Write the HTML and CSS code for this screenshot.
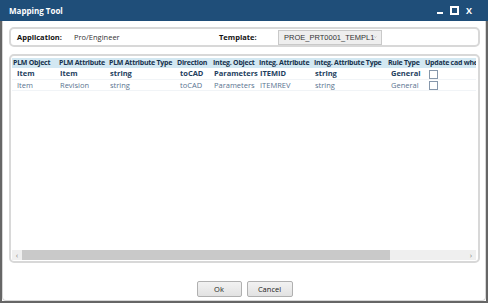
FILE: index.html
```html
<!DOCTYPE html>
<html lang="en">
  <head>
    <meta charset="UTF-8" />
    <title>Mapping Tool</title>
    <link rel="stylesheet" href="styles.css">
  </head>
  <body>
    <div class="window">
      <div class="titlebar">
        <span class="title">Mapping Tool</span>
        <div class="controls">
          <span class="ctl min"></span>
          <span class="ctl max"></span>
          <span class="ctl close">X</span>
        </div>
      </div>
      <div class="content">
        <div class="group top">
          <span class="label app-label">Application:</span>
          <span class="value">Pro/Engineer</span>
          <span class="label tpl-label">Template:</span>
          <div class="combo">
            <span>PROE_PRT0001_TEMPL1</span>
            <svg class="chev" width="6" height="4" viewBox="0 0 6 4"><path d="M1 1 L3 3 L5 1" fill="none" stroke="#777" stroke-width="0.9"/></svg>
          </div>
        </div>
        <div class="group grid">
          <div class="table-wrap">
            <table class="map">
              <colgroup>
                <col class="c1"><col class="c2"><col class="c3"><col class="c4"><col class="c5">
                <col class="c6"><col class="c7"><col class="c8"><col class="c9">
              </colgroup>
              <thead>
                <tr>
                  <th>PLM Object</th>
                  <th>PLM Attribute</th>
                  <th>PLM Attribute Type</th>
                  <th>Direction</th>
                  <th>Integ. Object</th>
                  <th>Integ. Attribute</th>
                  <th>Integ. Attribute Type</th>
                  <th>Rule Type</th>
                  <th>Update cad when</th>
                </tr>
              </thead>
              <tbody>
                <tr class="sel">
                  <td class="first">Item</td>
                  <td>Item</td>
                  <td>string</td>
                  <td class="dir">toCAD</td>
                  <td>Parameters</td>
                  <td>ITEMID</td>
                  <td>string</td>
                  <td class="rule">General</td>
                  <td><span class="check"></span></td>
                </tr>
                <tr>
                  <td class="first">Item</td>
                  <td>Revision</td>
                  <td>string</td>
                  <td class="dir">toCAD</td>
                  <td>Parameters</td>
                  <td>ITEMREV</td>
                  <td>string</td>
                  <td class="rule">General</td>
                  <td><span class="check"></span></td>
                </tr>
              </tbody>
            </table>
          </div>
          <div class="hscroll">
            <span class="arrow">&lsaquo;</span>
            <div class="track"><div class="thumb"></div></div>
            <span class="arrow">&rsaquo;</span>
          </div>
        </div>
        <div class="buttons">
          <button class="btn ok">Ok</button>
          <button class="btn cancel">Cancel</button>
        </div>
      </div>
    </div>
  </body>
</html>
```

FILE: styles.css
```css
body,
html {
  margin: 0;
  padding: 0;
  font-family: 'Open Sans', 'Noto Sans', sans-serif;
  font-size: 7.5px;
  -webkit-font-smoothing: antialiased;
}
body {
  background: #6a6a6a;
}
.window {
  box-sizing: border-box;
  width: 488px;
  height: 303px;
  border: 2px solid #666;
  border-top: none;
  background: #fff;
  display: flex;
  flex-direction: column;
}
.titlebar {
  height: 21px;
  background: #1f4e79;
  color: #fff;
  display: flex;
  align-items: center;
  padding: 0 0 0 9px;
  margin: 0 -2px;
}
.title {
  font-weight: bold;
  font-size: 8px;
}
.controls {
  margin-left: auto;
  display: flex;
  align-items: center;
  gap: 7px;
  padding-right: 16px;
}
.ctl {
  display: block;
}
.min {
  width: 6px;
  height: 2px;
  background: #fff;
  margin-top: 4px;
}
.max {
  width: 5px;
  height: 5px;
  border: 2px solid #fff;
}
.close {
  font-weight: bold;
  font-size: 9px;
  line-height: 9px;
}
.content {
  flex: 1;
  display: flex;
  flex-direction: column;
  padding: 6px 5px 0 6px;
  border: 1px solid #d6d6d6;
  border-top: none;
  border-radius: 0 0 4px 4px;
}
.group {
  border: 2px solid #d8d8d8;
  border-radius: 5px;
}
.top {
  height: 16px;
  display: flex;
  align-items: center;
  padding: 0 0 0 6px;
}
.label {
  font-weight: bold;
  color: #111;
}
.app-label {
  width: 57px;
}
.value {
  color: #333;
  width: 145px;
}
.tpl-label {
  width: 59px;
}
.combo {
  box-sizing: border-box;
  width: 104px;
  height: 15px;
  background: #eeeeee;
  border: 1px solid #c9c9c9;
  display: flex;
  align-items: center;
  padding: 0 4px 0 5px;
  font-family: 'Liberation Sans', Arial, sans-serif;
  font-size: 7.5px;
  color: #333;
}
.chev {
  margin-left: auto;
}
.grid {
  margin-top: 7px;
  height: 202px;
  padding: 2px 2px 1px 1px;
  display: flex;
  flex-direction: column;
}
.table-wrap {
  flex: 1;
  overflow: hidden;
}
.map {
  border-collapse: collapse;
  table-layout: fixed;
  width: 500px;
  white-space: nowrap;
}
.c1 { width: 46px; }
.c2 { width: 50px; }
.c3 { width: 68px; }
.c4 { width: 36px; }
.c5 { width: 46px; }
.c6 { width: 55px; }
.c7 { width: 74px; }
.c8 { width: 37px; }
.c9 { width: 88px; }
.map th {
  background: #d3e8f2;
  color: #17324d;
  font-weight: bold;
  font-size: 7px;
  letter-spacing: -0.25px;
  text-align: left;
  height: 10px;
  padding: 0 0 0 1px;
  overflow: hidden;
  line-height: 10px;
}
.map td {
  height: 10px;
  line-height: 10px;
  padding: 0 0 0 2px;
  color: #5a7490;
  overflow: hidden;
  border-bottom: 1px solid #f1f4f7;
}
.map td.first {
  padding-left: 5px;
}
.map td.dir,
.map td.rule {
  padding-left: 4px;
}
.map .sel td {
  color: #23405e;
  font-weight: bold;
}
.check {
  display: inline-block;
  width: 7px;
  height: 7px;
  border: 1px solid #8697ab;
  background: #fff;
  margin-left: 3px;
  vertical-align: middle;
}
.hscroll {
  height: 10px;
  display: flex;
  align-items: center;
  background: #efefef;
}
.arrow {
  width: 10px;
  text-align: center;
  color: #888;
  font-size: 8px;
  line-height: 10px;
}
.track {
  flex: 1;
  height: 10px;
}
.thumb {
  width: 368px;
  height: 10px;
  background: #c9c9c9;
}
.buttons {
  display: flex;
  justify-content: center;
  gap: 5px;
  margin-top: 18px;
}
.btn {
  box-sizing: border-box;
  height: 16px;
  width: 45px;
  padding: 0;
  font-family: 'Open Sans', 'Noto Sans', sans-serif;
  font-size: 7.5px;
  color: #222;
  background: linear-gradient(#f2f2f2, #e2e2e2);
  border: 1px solid #b0b0b0;
  border-radius: 2px;
}
.cancel {
  width: 46px;
}
```
